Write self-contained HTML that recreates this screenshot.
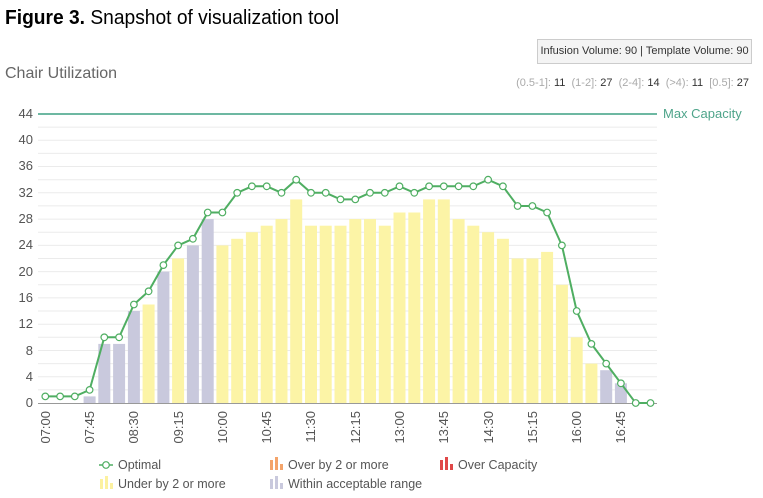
<!DOCTYPE html>
<html><head><meta charset="utf-8"><style>
body{margin:0;width:763px;height:498px;background:#fff;overflow:hidden;font-family:"Liberation Sans",sans-serif;position:relative}
.a{position:absolute;white-space:nowrap}
</style></head><body>
<div class="a" style="left:5px;top:7px;font-size:20px;color:#000;transform:scaleX(0.96);transform-origin:0 0"><b>Figure 3.</b> Snapshot of visualization tool</div>
<div class="a" style="left:537px;top:39px;width:213px;height:23px;background:#f4f4f4;border:1px solid #ccc;font-size:11px;line-height:23px;text-align:center;color:#333">Infusion Volume: 90 | Template Volume: 90</div>
<div class="a" style="left:5px;top:65px;font-size:16px;color:#666">Chair Utilization</div>
<div class="a" style="right:14px;top:77px;font-size:11px;color:#aaa">(0.5-1]: <span style="color:#333">11</span>&nbsp; (1-2]: <span style="color:#333">27</span>&nbsp; (2-4]: <span style="color:#333">14</span>&nbsp; (&gt;4): <span style="color:#333">11</span>&nbsp; [0.5]: <span style="color:#333">27</span></div>
<svg class="a" style="left:0;top:0" width="763" height="498" font-family="Liberation Sans, sans-serif">
<g stroke="#ebebeb" stroke-width="1">
<line x1="38" x2="657" y1="389.9" y2="389.9"/><line x1="38" x2="657" y1="376.7" y2="376.7"/><line x1="38" x2="657" y1="363.6" y2="363.6"/><line x1="38" x2="657" y1="350.5" y2="350.5"/><line x1="38" x2="657" y1="337.3" y2="337.3"/><line x1="38" x2="657" y1="324.2" y2="324.2"/><line x1="38" x2="657" y1="311.0" y2="311.0"/><line x1="38" x2="657" y1="297.9" y2="297.9"/><line x1="38" x2="657" y1="284.8" y2="284.8"/><line x1="38" x2="657" y1="271.6" y2="271.6"/><line x1="38" x2="657" y1="258.5" y2="258.5"/><line x1="38" x2="657" y1="245.4" y2="245.4"/><line x1="38" x2="657" y1="232.2" y2="232.2"/><line x1="38" x2="657" y1="219.1" y2="219.1"/><line x1="38" x2="657" y1="205.9" y2="205.9"/><line x1="38" x2="657" y1="192.8" y2="192.8"/><line x1="38" x2="657" y1="179.7" y2="179.7"/><line x1="38" x2="657" y1="166.5" y2="166.5"/><line x1="38" x2="657" y1="153.4" y2="153.4"/><line x1="38" x2="657" y1="140.3" y2="140.3"/><line x1="38" x2="657" y1="127.1" y2="127.1"/>
</g>
<line x1="38" x2="657" y1="114" y2="114" stroke="#6db8a2" stroke-width="2"/>
<text x="663" y="118" font-size="13" fill="#4ea48a">Max Capacity</text>
<g font-size="13" fill="#555" text-anchor="end">
<text x="33" y="118">44</text><text x="33" y="144">40</text><text x="33" y="170">36</text><text x="33" y="197">32</text><text x="33" y="223">28</text><text x="33" y="249">24</text><text x="33" y="276">20</text><text x="33" y="302">16</text><text x="33" y="328">12</text><text x="33" y="355">8</text><text x="33" y="381">4</text><text x="33" y="407">0</text>
</g>
<g>
<rect x="83.6" y="396.4" width="12" height="6.6" fill="#c9c9dd"/>
<rect x="98.3" y="343.9" width="12" height="59.1" fill="#c9c9dd"/>
<rect x="113.1" y="343.9" width="12" height="59.1" fill="#c9c9dd"/>
<rect x="127.9" y="311.0" width="12" height="92" fill="#c9c9dd"/>
<rect x="142.6" y="304.5" width="12" height="98.5" fill="#fcf4a6"/>
<rect x="157.4" y="271.6" width="12" height="131.4" fill="#c9c9dd"/>
<rect x="172.1" y="258.5" width="12" height="144.5" fill="#fcf4a6"/>
<rect x="186.9" y="245.4" width="12" height="157.6" fill="#c9c9dd"/>
<rect x="201.7" y="219.1" width="12" height="183.9" fill="#c9c9dd"/>
<rect x="216.4" y="245.4" width="12" height="157.6" fill="#fcf4a6"/>
<rect x="231.2" y="238.8" width="12" height="164.2" fill="#fcf4a6"/>
<rect x="245.9" y="232.2" width="12" height="170.8" fill="#fcf4a6"/>
<rect x="260.7" y="225.7" width="12" height="177.3" fill="#fcf4a6"/>
<rect x="275.5" y="219.1" width="12" height="183.9" fill="#fcf4a6"/>
<rect x="290.2" y="199.4" width="12" height="203.6" fill="#fcf4a6"/>
<rect x="305.0" y="225.7" width="12" height="177.3" fill="#fcf4a6"/>
<rect x="319.7" y="225.7" width="12" height="177.3" fill="#fcf4a6"/>
<rect x="334.5" y="225.7" width="12" height="177.3" fill="#fcf4a6"/>
<rect x="349.3" y="219.1" width="12" height="183.9" fill="#fcf4a6"/>
<rect x="364.0" y="219.1" width="12" height="183.9" fill="#fcf4a6"/>
<rect x="378.8" y="225.7" width="12" height="177.3" fill="#fcf4a6"/>
<rect x="393.5" y="212.5" width="12" height="190.5" fill="#fcf4a6"/>
<rect x="408.3" y="212.5" width="12" height="190.5" fill="#fcf4a6"/>
<rect x="423.1" y="199.4" width="12" height="203.6" fill="#fcf4a6"/>
<rect x="437.8" y="199.4" width="12" height="203.6" fill="#fcf4a6"/>
<rect x="452.6" y="219.1" width="12" height="183.9" fill="#fcf4a6"/>
<rect x="467.3" y="225.7" width="12" height="177.3" fill="#fcf4a6"/>
<rect x="482.1" y="232.2" width="12" height="170.8" fill="#fcf4a6"/>
<rect x="496.9" y="238.8" width="12" height="164.2" fill="#fcf4a6"/>
<rect x="511.6" y="258.5" width="12" height="144.5" fill="#fcf4a6"/>
<rect x="526.4" y="258.5" width="12" height="144.5" fill="#fcf4a6"/>
<rect x="541.1" y="251.9" width="12" height="151.1" fill="#fcf4a6"/>
<rect x="555.9" y="284.8" width="12" height="118.2" fill="#fcf4a6"/>
<rect x="570.7" y="337.3" width="12" height="65.7" fill="#fcf4a6"/>
<rect x="585.4" y="363.6" width="12" height="39.4" fill="#fcf4a6"/>
<rect x="600.2" y="370.2" width="12" height="32.8" fill="#c9c9dd"/>
<rect x="614.9" y="383.3" width="12" height="19.7" fill="#c9c9dd"/>
</g>
<line x1="38" x2="657" y1="403.5" y2="403.5" stroke="#999" stroke-width="1"/>
<polyline fill="none" stroke="#4fae62" stroke-width="2" points="45.3,396.4 60.1,396.4 74.8,396.4 89.6,389.9 104.3,337.3 119.1,337.3 133.9,304.5 148.6,291.3 163.4,265.1 178.1,245.4 192.9,238.8 207.7,212.5 222.4,212.5 237.2,192.8 251.9,186.3 266.7,186.3 281.5,192.8 296.2,179.7 311.0,192.8 325.7,192.8 340.5,199.4 355.3,199.4 370.0,192.8 384.8,192.8 399.5,186.3 414.3,192.8 429.1,186.3 443.8,186.3 458.6,186.3 473.3,186.3 488.1,179.7 502.9,186.3 517.6,206.0 532.4,206.0 547.1,212.5 561.9,245.4 576.7,311.0 591.4,343.9 606.2,363.6 620.9,383.3 635.7,403 650.5,403"/>
<g fill="#fff" stroke="#4fae62" stroke-width="1.2">
<circle cx="45.3" cy="396.4" r="3.3"/><circle cx="60.1" cy="396.4" r="3.3"/><circle cx="74.8" cy="396.4" r="3.3"/><circle cx="89.6" cy="389.9" r="3.3"/><circle cx="104.3" cy="337.3" r="3.3"/><circle cx="119.1" cy="337.3" r="3.3"/><circle cx="133.9" cy="304.5" r="3.3"/><circle cx="148.6" cy="291.3" r="3.3"/><circle cx="163.4" cy="265.1" r="3.3"/><circle cx="178.1" cy="245.4" r="3.3"/><circle cx="192.9" cy="238.8" r="3.3"/><circle cx="207.7" cy="212.5" r="3.3"/><circle cx="222.4" cy="212.5" r="3.3"/><circle cx="237.2" cy="192.8" r="3.3"/><circle cx="251.9" cy="186.3" r="3.3"/><circle cx="266.7" cy="186.3" r="3.3"/><circle cx="281.5" cy="192.8" r="3.3"/><circle cx="296.2" cy="179.7" r="3.3"/><circle cx="311.0" cy="192.8" r="3.3"/><circle cx="325.7" cy="192.8" r="3.3"/><circle cx="340.5" cy="199.4" r="3.3"/><circle cx="355.3" cy="199.4" r="3.3"/><circle cx="370.0" cy="192.8" r="3.3"/><circle cx="384.8" cy="192.8" r="3.3"/><circle cx="399.5" cy="186.3" r="3.3"/><circle cx="414.3" cy="192.8" r="3.3"/><circle cx="429.1" cy="186.3" r="3.3"/><circle cx="443.8" cy="186.3" r="3.3"/><circle cx="458.6" cy="186.3" r="3.3"/><circle cx="473.3" cy="186.3" r="3.3"/><circle cx="488.1" cy="179.7" r="3.3"/><circle cx="502.9" cy="186.3" r="3.3"/><circle cx="517.6" cy="206.0" r="3.3"/><circle cx="532.4" cy="206.0" r="3.3"/><circle cx="547.1" cy="212.5" r="3.3"/><circle cx="561.9" cy="245.4" r="3.3"/><circle cx="576.7" cy="311.0" r="3.3"/><circle cx="591.4" cy="343.9" r="3.3"/><circle cx="606.2" cy="363.6" r="3.3"/><circle cx="620.9" cy="383.3" r="3.3"/><circle cx="635.7" cy="403" r="3.3"/><circle cx="650.5" cy="403" r="3.3"/>
</g>
<g font-size="13" fill="#555" text-anchor="end">
<text transform="translate(50,411) rotate(-90)">07:00</text>
<text transform="translate(94,411) rotate(-90)">07:45</text>
<text transform="translate(138,411) rotate(-90)">08:30</text>
<text transform="translate(183,411) rotate(-90)">09:15</text>
<text transform="translate(227,411) rotate(-90)">10:00</text>
<text transform="translate(271,411) rotate(-90)">10:45</text>
<text transform="translate(315,411) rotate(-90)">11:30</text>
<text transform="translate(360,411) rotate(-90)">12:15</text>
<text transform="translate(404,411) rotate(-90)">13:00</text>
<text transform="translate(448,411) rotate(-90)">13:45</text>
<text transform="translate(493,411) rotate(-90)">14:30</text>
<text transform="translate(537,411) rotate(-90)">15:15</text>
<text transform="translate(581,411) rotate(-90)">16:00</text>
<text transform="translate(625,411) rotate(-90)">16:45</text>
</g>
<g font-size="12.5" fill="#555">
<line x1="99" x2="113" y1="465" y2="465" stroke="#4fae62" stroke-width="1.5"/><circle cx="106" cy="465" r="3.3" fill="#fff" stroke="#4fae62" stroke-width="1.2"/>
<text x="118" y="469">Optimal</text>
<rect x="270" y="460" width="3" height="10" fill="#f4a46a"/><rect x="275" y="457" width="3" height="13" fill="#f4a46a"/><rect x="280" y="464" width="3" height="6" fill="#f4a46a"/>
<text x="288" y="469">Over by 2 or more</text>
<rect x="440" y="460" width="3" height="10" fill="#e04848"/><rect x="445" y="457" width="3" height="13" fill="#e04848"/><rect x="450" y="464" width="3" height="6" fill="#e04848"/>
<text x="458" y="469">Over Capacity</text>
<rect x="100" y="479" width="3" height="10" fill="#fcf1a0"/><rect x="105" y="476" width="3" height="13" fill="#fcf1a0"/><rect x="110" y="483" width="3" height="6" fill="#fcf1a0"/>
<text x="118" y="488">Under by 2 or more</text>
<rect x="270" y="479" width="3" height="10" fill="#c9c9dd"/><rect x="275" y="476" width="3" height="13" fill="#c9c9dd"/><rect x="280" y="483" width="3" height="6" fill="#c9c9dd"/>
<text x="288" y="488">Within acceptable range</text>
</g>
</svg>
</body></html>
